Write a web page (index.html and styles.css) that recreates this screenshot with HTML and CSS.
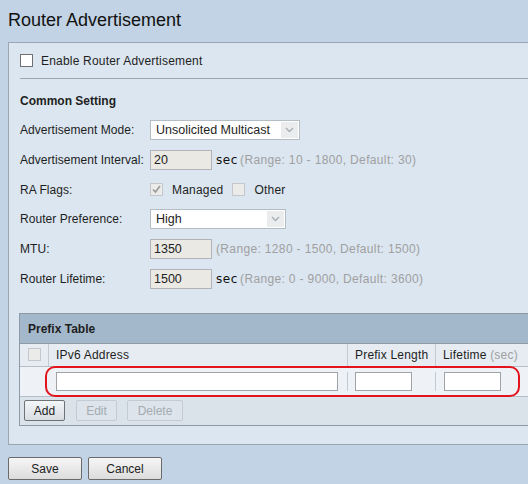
FILE: index.html
```html
<!DOCTYPE html>
<html>
<head>
<meta charset="utf-8">
<link rel="stylesheet" href="styles.css">
</head>
<body>
<h1 class="title">Router Advertisement</h1>
<div class="panel">
  <div class="enable">
    <span class="cb"></span>
    <span class="enable-label">Enable Router Advertisement</span>
  </div>
  <div class="section-title">Common Setting</div>
  <div class="form">
    <div class="row">
      <span class="label">Advertisement Mode:</span>
      <span class="select sel-wide"><span class="sel-text">Unsolicited Multicast</span><span class="sel-arrow"><svg width="9" height="6" viewBox="0 0 9 6"><path d="M1 1 L4.5 4.5 L8 1" fill="none" stroke="#a8aeb4" stroke-width="1.4"/></svg></span></span>
    </div>
    <div class="row">
      <span class="label">Advertisement Interval:</span>
      <span class="input dis">20</span>
      <span class="unit">sec</span><span class="hint">(Range: 10 - 1800, Default: 30)</span>
    </div>
    <div class="row">
      <span class="label">RA Flags:</span>
      <span class="cb dis-cb"><svg width="11" height="11" viewBox="0 0 11 11"><path d="M2 5.5 L4.5 8 L9 2" fill="none" stroke="#9a9a9a" stroke-width="1.6"/></svg></span>
      <span class="flag">Managed</span>
      <span class="cb dis-cb"></span>
      <span class="flag">Other</span>
    </div>
    <div class="row">
      <span class="label">Router Preference:</span>
      <span class="select sel-mid"><span class="sel-text">High</span><span class="sel-arrow"><svg width="9" height="6" viewBox="0 0 9 6"><path d="M1 1 L4.5 4.5 L8 1" fill="none" stroke="#a8aeb4" stroke-width="1.4"/></svg></span></span>
    </div>
    <div class="row">
      <span class="label">MTU:</span>
      <span class="input dis">1350</span>
      <span class="hint hint-near">(Range: 1280 - 1500, Default: 1500)</span>
    </div>
    <div class="row">
      <span class="label">Router Lifetime:</span>
      <span class="input dis">1500</span>
      <span class="unit">sec</span><span class="hint">(Range: 0 - 9000, Default: 3600)</span>
    </div>
  </div>
  <div class="ptable">
    <div class="ph">Prefix Table</div>
    <div class="pcols">
      <div class="c-cb"><span class="cb dis-cb small"></span></div>
      <div class="c-addr">IPv6 Address</div>
      <div class="c-len">Prefix Length</div>
      <div class="c-life">Lifetime <span class="muted">(sec)</span></div>
    </div>
    <div class="prow">
      <div class="c-cb"></div>
      <div class="c-addr"><span class="tin tin-addr"></span></div>
      <div class="c-len"><span class="tin tin-s"></span></div>
      <div class="c-life"><span class="tin tin-s"></span></div>
      <div class="highlight"></div>
    </div>
    <div class="pbtns">
      <span class="btn">Add</span>
      <span class="btn btn-dis">Edit</span>
      <span class="btn btn-dis btn-del">Delete</span>
    </div>
  </div>
</div>
<div class="actions">
  <span class="btn btn-big">Save</span>
  <span class="btn btn-big">Cancel</span>
</div>
</body>
</html>
```
FILE: styles.css
```css
html, body { margin: 0; padding: 0; overflow: hidden; }
body {
  width: 528px; height: 484px;
  background: #c1d3e4;
  font-family: "Liberation Sans", Arial, sans-serif;
  font-size: 12px;
  color: #1e1e1e;
}
.title {
  margin: 0;
  height: 42px;
  padding-left: 8px;
  font-weight: normal;
  font-size: 18px;
  line-height: 40px;
  color: #111;
}
.panel {
  margin-left: 8px;
  width: 540px;
  height: 403px;
  box-sizing: border-box;
  border: 1px solid #9aa6b2;
  border-right: none;
  background: #dbe6f0;
}
.enable {
  display: flex;
  align-items: center;
  height: 35px;
  margin-left: 11px;
  border-bottom: 1px solid #9ea6ae;
}
.cb {
  display: inline-flex;
  align-items: center;
  justify-content: center;
  box-sizing: border-box;
  width: 13px; height: 13px;
  border: 1px solid #707070;
  background: #fff;
}
.enable .cb { margin-top: -1px; }
.enable-label { margin-left: 8px; letter-spacing: 0.2px; }
.section-title {
  font-weight: bold;
  margin: 15px 0 0 11px;
  height: 14px;
  line-height: 14px;
}
.form {
  display: flex;
  flex-direction: column;
  gap: 9.8px;
  margin: 12px 0 0 11px;
}
.row {
  display: flex;
  align-items: center;
  height: 20px;
}
.label { width: 130px; letter-spacing: 0.05px; }
.select {
  display: flex;
  align-items: center;
  box-sizing: border-box;
  height: 20px;
  background: #fff;
  border: 1px solid #b4bcc4;
}
.sel-wide { width: 150px; }
.sel-mid { width: 136px; }
.sel-text { flex: 1; padding-left: 5px; font-size: 12.5px; }
.sel-arrow {
  display: flex;
  align-items: center;
  justify-content: center;
  width: 17px; height: 16px;
  margin-right: 1px;
  background: #ebeced;
}
.input {
  box-sizing: border-box;
  width: 62px; height: 20px;
  border: 1px solid #b0b4b8;
  padding-left: 3px;
  line-height: 18px;
  font-size: 12.5px;
}
.dis { background: #ebe9e4; color: #222; }
.unit {
  margin-left: 4px;
  color: #111;
  font-family: "DejaVu Sans", sans-serif;
  font-size: 12px;
  letter-spacing: 0.6px;
}
.hint { margin-left: 2px; color: #a0a0a0; letter-spacing: 0.35px; }
.hint-near { margin-left: 4px; }
.dis-cb { border-color: #c4c8cc; background: #ebebea; }
.flag { margin: 0 9px 0 9px; letter-spacing: 0.2px; }
.ptable {
  margin: 24px 0 0 10px;
  border: 1px solid #8e9aa6;
  border-right: none;
  background: #dbe3ea;
}
.ph {
  height: 29px;
  line-height: 30px;
  background: #a3b9cb;
  border-bottom: 1px solid #8e9aa6;
  padding-left: 8px;
  font-weight: bold;
}
.pcols, .prow {
  position: relative;
  display: flex;
  border-bottom: 1px solid #b4bec8;
}
.pcols { height: 22px; background: #e6ecf2; line-height: 22px; letter-spacing: 0.2px; }
.prow { height: 29px; background: #eef2f6; align-items: center; }
.c-cb { width: 28px; display: flex; align-items: center; justify-content: center; border-right: 1px solid #c2cad2; align-self: stretch; }
.prow .c-cb { border-right: none; }
.c-addr { width: 291px; padding-left: 7px; border-right: 1px solid #c2cad2; }
.c-len { width: 80px; padding-left: 7px; border-right: 1px solid #c2cad2; }
.c-life { flex: 1; padding-left: 7px; }
.prow .c-addr { padding-left: 8px; }
.prow .c-len { padding-left: 7px; }
.prow .c-life { padding-left: 8px; }
.small { width: 13px; height: 13px; }
.muted { color: #a0a0a0; }
.tin {
  display: block;
  box-sizing: border-box;
  height: 19px;
  background: #fff;
  border: 1px solid #a0a4a8;
}
.tin-addr { width: 282px; }
.tin-s { width: 57px; }
.highlight {
  position: absolute;
  left: 25px; top: -1px;
  width: 475px; height: 31px;
  box-sizing: border-box;
  border: 2.5px solid #e3141c;
  border-radius: 10px;
}
.pbtns {
  display: flex;
  align-items: center;
  gap: 11px;
  height: 28px;
  padding-left: 4px;
}
.btn {
  display: inline-flex;
  align-items: center;
  justify-content: center;
  box-sizing: border-box;
  width: 41px; height: 21px;
  border: 1px solid #6e7378;
  border-radius: 2px;
  background: linear-gradient(#f4f6f8, #d8dde2);
  color: #222;
  font-size: 12px;
}
.btn-dis {
  border-color: #c3cbd3;
  background: #dde4eb;
  color: #a4abb2;
}
.btn-del { width: 56px; margin-left: -1px; }
.actions {
  display: flex;
  gap: 6px;
  margin: 12px 0 0 8px;
}
.btn-big {
  width: 74px; height: 23px;
  background: linear-gradient(#f6f6f6, #dcdcdc);
  border-color: #6a6a6a;
}
```
